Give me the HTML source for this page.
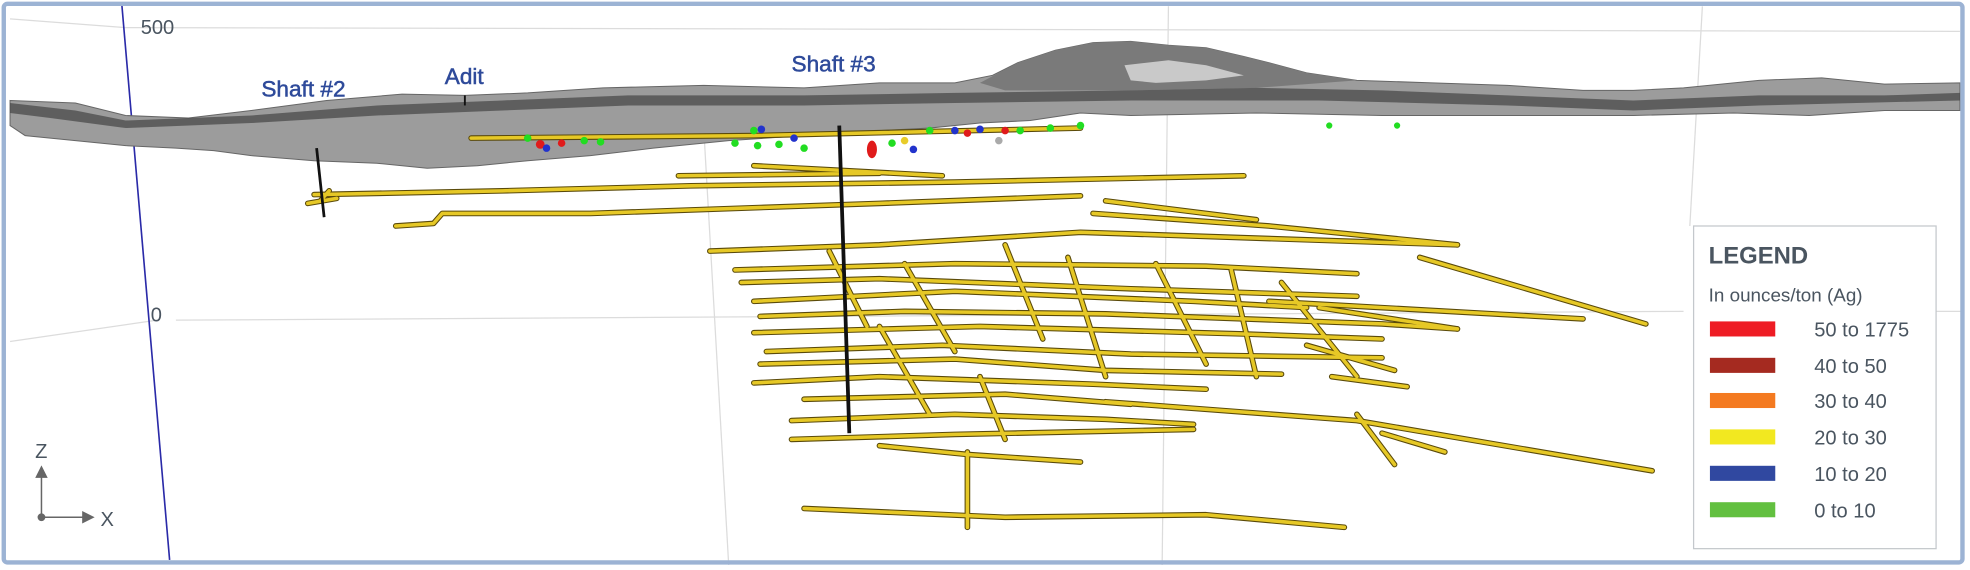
<!DOCTYPE html>
<html><head><meta charset="utf-8"><style>
html,body{margin:0;padding:0;background:#fff;}
body{width:1970px;height:570px;overflow:hidden;position:relative;font-family:"Liberation Sans",sans-serif;}
svg{position:absolute;left:0;top:0;}
</style></head><body>
<svg width="1970" height="570" viewBox="0 0 1568 454" preserveAspectRatio="none">
<defs>
<g id="t">
<path d="M375,110 L600,108 L860,102"/>
<path d="M250,155 L400,152 L550,148 L760,145 L990,140"/>
<path d="M255,160 L262,152 M245,162 L268,158"/>
<path d="M315,180 L345,178 L352,170 L470,170 L700,162 L860,156"/>
<path d="M540,140 L700,138 M600,132 L750,140"/>
<path d="M565,200 L700,195 L860,185 L1160,195"/>
<path d="M870,170 L1010,180 L1160,195"/>
<path d="M1130,205 L1310,258"/>
<path d="M585,215 L760,210 L960,212 L1080,218"/>
<path d="M590,225 L700,222 L900,230 L1080,236"/>
<path d="M600,240 L760,232 L950,240 L1040,245"/>
<path d="M605,252 L720,248 L880,250 L1100,258 L1160,262"/>
<path d="M600,265 L780,260 L990,266 L1100,270"/>
<path d="M610,280 L750,275 L900,282 L1100,285"/>
<path d="M605,290 L760,286 L880,295 L1020,298"/>
<path d="M600,305 L700,300 L870,306 L960,310"/>
<path d="M640,318 L800,314 L900,322"/>
<path d="M630,335 L760,330 L880,334 L950,338"/>
<path d="M630,350 L760,346 L950,342"/>
<path d="M880,320 L1080,335 L1315,375"/>
<path d="M1080,330 L1110,370"/>
<path d="M1100,345 L1150,360"/>
<path d="M700,355 L770,362 L860,368"/>
<path d="M640,405 L800,412 L960,410 L1070,420"/>
<path d="M770,360 L770,420"/>
<path d="M660,200 L690,260 M720,210 L760,280 M800,195 L830,270 M850,205 L880,300 M920,210 L960,290 M980,215 L1000,300 M1020,225 L1080,300 M700,260 L740,330 M780,300 L800,350"/>
<path d="M1050,245 L1160,262 M1040,275 L1110,295 M1060,300 L1120,308"/>
<path d="M880,160 L1000,175 M1010,240 L1260,254"/>
</g>
</defs>
<rect x="0" y="0" width="1568" height="454" fill="#fff"/>
<g stroke="#dcdcdc" stroke-width="1" fill="none">
<line x1="8" y1="15" x2="100" y2="22"/>
<line x1="100" y1="22" x2="1560" y2="25"/>
<line x1="930" y1="5" x2="925" y2="450"/>
<line x1="1355" y1="5" x2="1345" y2="180"/>
<line x1="8" y1="272" x2="125" y2="255"/>
<line x1="140" y1="255" x2="1340" y2="248"/>
<line x1="1540" y1="248" x2="1562" y2="248"/>
<line x1="560" y1="100" x2="580" y2="450"/>
</g>
<line x1="97" y1="4" x2="135" y2="446" stroke="#2a2aa8" stroke-width="1.3"/>
<polygon fill="#9c9c9c" stroke="#666" stroke-width="0.8" points="8,80 60,82 100,92 150,94 200,88 260,80 320,75 370,76 420,74 480,70 560,68 640,70 700,66 760,66 790,60 810,50 840,40 870,34 900,33 930,36 960,38 990,45 1010,50 1040,58 1080,64 1140,66 1200,68 1260,72 1300,72 1340,70 1400,64 1450,62 1500,67 1560,66 1560,88 1500,88 1440,92 1380,90 1300,92 1200,92 1100,92 1000,90 900,92 860,90 820,96 780,98 740,102 700,104 640,108 580,112 520,118 470,124 420,128 380,132 340,134 300,130 250,128 200,124 170,120 140,118 100,116 60,112 20,108 8,100"/>
<polygon fill="#7a7a7a" points="780,66 810,50 840,40 870,34 900,33 930,36 960,38 990,45 1010,50 1040,58 1080,64 1000,70 900,72 800,72"/>
<polygon fill="#454545" opacity="0.7" points="8,82 60,88 100,96 200,92 300,84 400,80 500,76 640,76 760,74 900,72 1000,70 1100,72 1200,76 1300,80 1400,76 1500,76 1560,74 1560,80 1400,84 1300,88 1200,84 1050,80 900,80 760,82 640,84 500,84 400,88 300,92 200,98 100,102 40,94 8,90"/>
<polygon fill="#c9c9c9" points="895,52 930,48 960,52 990,60 960,64 920,66 900,64"/>
<g fill="none" stroke-linecap="round" stroke-linejoin="round">
<use href="#t" stroke="#5a4a0a" stroke-width="4.5"/>
<use href="#t" stroke="#e6c826" stroke-width="2.8"/>
</g>
<line x1="252" y1="118" x2="258" y2="173" stroke="#111" stroke-width="2.2"/>
<line x1="370" y1="76" x2="370" y2="84" stroke="#111" stroke-width="1.5"/>
<line x1="668" y1="100" x2="676" y2="345" stroke="#111" stroke-width="3"/>
<g>
<circle cx="420" cy="110" r="3" fill="#22dd22"/><circle cx="430" cy="115" r="3.5" fill="#e01b1b"/><circle cx="435" cy="118" r="3" fill="#2233cc"/><circle cx="447" cy="114" r="3" fill="#e01b1b"/><circle cx="465" cy="112" r="3" fill="#22dd22"/><circle cx="478" cy="113" r="3" fill="#22dd22"/>
<circle cx="600" cy="104" r="3" fill="#22dd22"/><circle cx="606" cy="103" r="3" fill="#2233cc"/><circle cx="603" cy="116" r="3" fill="#22dd22"/><circle cx="620" cy="115" r="3" fill="#22dd22"/><circle cx="632" cy="110" r="3" fill="#2233cc"/><circle cx="640" cy="118" r="3" fill="#22dd22"/><circle cx="585" cy="114" r="3" fill="#22dd22"/>
<ellipse cx="694" cy="119" rx="4" ry="7" fill="#e01b1b"/><circle cx="710" cy="114" r="3" fill="#22dd22"/><circle cx="727" cy="119" r="3" fill="#2233cc"/><circle cx="720" cy="112" r="3" fill="#e8cc2a"/>
<circle cx="740" cy="104" r="3" fill="#22dd22"/><circle cx="760" cy="104" r="3" fill="#2233cc"/><circle cx="770" cy="106" r="3" fill="#e01b1b"/><circle cx="780" cy="103" r="3" fill="#2233cc"/><circle cx="795" cy="112" r="3" fill="#aaaaaa"/><circle cx="800" cy="104" r="3" fill="#e01b1b"/><circle cx="812" cy="104" r="3" fill="#22dd22"/><circle cx="836" cy="102" r="3" fill="#22dd22"/><circle cx="860" cy="100" r="3" fill="#22dd22"/>
<circle cx="1058" cy="100" r="2.5" fill="#22dd22"/><circle cx="1112" cy="100" r="2.5" fill="#22dd22"/>
</g>
<g font-family="Liberation Sans, sans-serif">
<text x="112" y="27" font-size="16" fill="#4a5560">500</text>
<text x="120" y="256" font-size="16" fill="#4a5560">0</text>
<g fill="#2e4a9a" stroke="#2e4a9a" stroke-width="0.4">
<text x="208" y="77" font-size="18">Shaft #2</text>
<text x="354" y="67" font-size="18">Adit</text>
<text x="630" y="57" font-size="18">Shaft #3</text>
</g>
<text x="28" y="365" font-size="16" fill="#4a5560">Z</text>
<text x="80" y="419" font-size="16" fill="#4a5560">X</text>
</g>
<g stroke="#666" stroke-width="1.2" fill="#666">
<line x1="33" y1="412" x2="33" y2="378"/><polygon points="29,380 37,380 33,372"/>
<line x1="33" y1="412" x2="68" y2="412"/><polygon points="66,408 66,416 74,412"/>
<circle cx="33" cy="412" r="2.5"/>
</g>
<rect x="1348" y="180" width="193" height="257" fill="#fff" stroke="#c4c8cc" stroke-width="1"/>
<g font-family="Liberation Sans, sans-serif" fill="#4a5560">
<text x="1360" y="210" font-size="19" font-weight="bold">LEGEND</text>
<text x="1360" y="240" font-size="15">In ounces/ton (Ag)</text>
<rect x="1361" y="256" width="52" height="12" fill="#ee1c24"/><text x="1444" y="268" font-size="16">50 to 1775</text>
<rect x="1361" y="285" width="52" height="12" fill="#a52a20"/><text x="1444" y="297" font-size="16">40 to 50</text>
<rect x="1361" y="313" width="52" height="12" fill="#f47a20"/><text x="1444" y="325" font-size="16">30 to 40</text>
<rect x="1361" y="342" width="52" height="12" fill="#f2e820"/><text x="1444" y="354" font-size="16">20 to 30</text>
<rect x="1361" y="371" width="52" height="12" fill="#3048a0"/><text x="1444" y="383" font-size="16">10 to 20</text>
<rect x="1361" y="400" width="52" height="12" fill="#62c040"/><text x="1444" y="412" font-size="16">0 to 10</text>
</g>
<rect x="3" y="3" width="1559" height="445" rx="3" fill="none" stroke="#9cb3d4" stroke-width="3.5"/>
</svg>
</body></html>
